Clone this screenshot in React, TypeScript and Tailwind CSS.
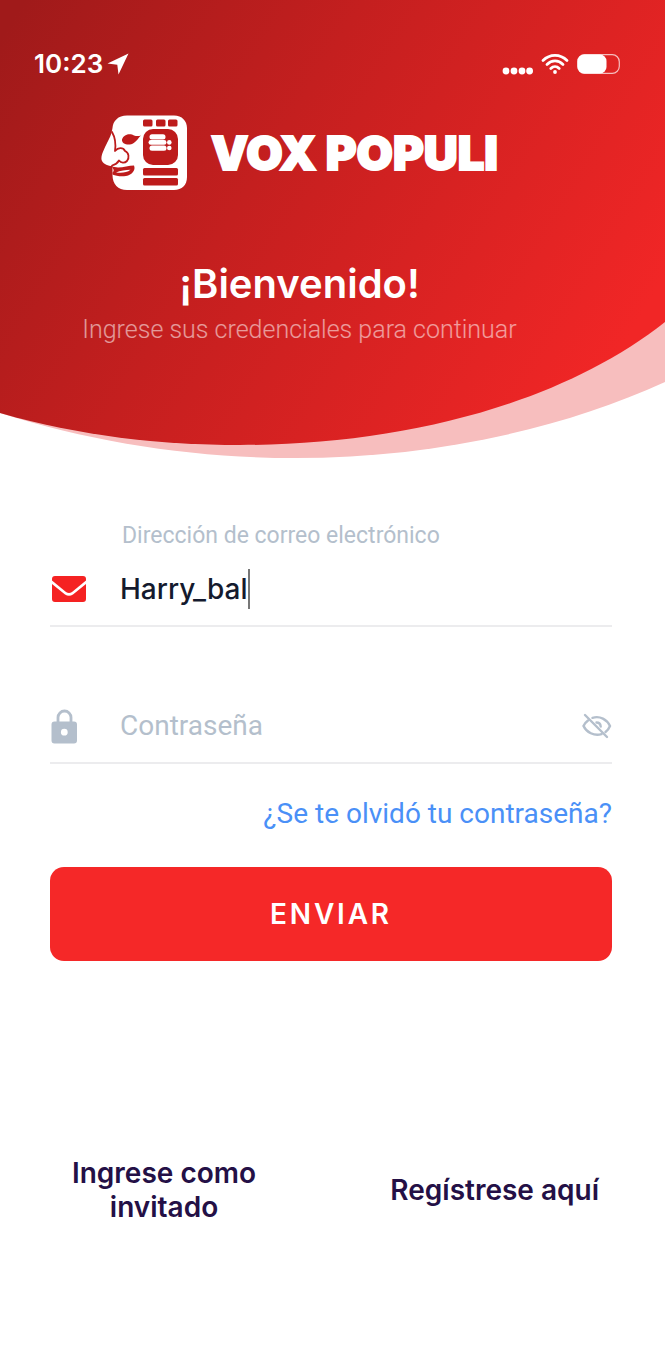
import React, { useState } from 'react';

function HeaderWave() {
  return (
    <svg
      className="absolute inset-0 w-full h-full"
      viewBox="0 0 665 460"
      preserveAspectRatio="none"
      aria-hidden="true"
    >
      <defs>
        <linearGradient id="wave" gradientUnits="userSpaceOnUse" x1="0" y1="40" x2="590" y2="400">
          <stop offset="0" stopColor="#a01a1a" />
          <stop offset="0.42" stopColor="#c41f1f" />
          <stop offset="1" stopColor="#f12626" />
        </linearGradient>
      </defs>
      <path d="M0 0V413C95 443 195 458 295 458C430 458 560 430 665 382V0Z" fill="#f7bebe" />
      <path d="M0 0V413C80 436 160 445 240 445C400 445 560 405 665 322V0Z" fill="url(#wave)" />
    </svg>
  );
}

function LocationIcon() {
  return (
    <svg width="22" height="22" viewBox="0 0 22 22" fill="#fff" aria-hidden="true">
      <path d="M21.5 0.5L11.5 21.5L10.3 11.7L0.5 10.5Z" />
    </svg>
  );
}

function SignalIcon() {
  return (
    <svg width="32" height="22" viewBox="0 0 32 22" fill="#fff" aria-hidden="true">
      <circle cx="5" cy="18" r="3.4" />
      <circle cx="13" cy="18" r="3.4" />
      <circle cx="21" cy="18" r="3.4" />
      <circle cx="28.6" cy="18" r="3.4" />
    </svg>
  );
}

function WifiIcon() {
  return (
    <svg width="28" height="22" viewBox="0 0 28 22" fill="none" stroke="#fff" strokeWidth="2.8" strokeLinecap="round" aria-hidden="true">
      <path d="M2 7.4C8.8 0.6 19.2 0.6 26 7.4" />
      <path d="M6 11.4C10.6 6.8 17.4 6.8 22 11.4" />
      <path d="M9.8 15.4C12.2 13 15.8 13 18.2 15.4" />
      <circle cx="14" cy="19" r="1.9" fill="#fff" stroke="none" />
    </svg>
  );
}

function BatteryIcon() {
  return (
    <svg width="43" height="20" viewBox="0 0 43 20" aria-hidden="true">
      <rect x="0.7" y="0.7" width="41.6" height="18.6" rx="7" fill="none" stroke="#fff" strokeOpacity="0.7" strokeWidth="1.2" />
      <rect x="0.5" y="0.5" width="29" height="19" rx="6.5" fill="#fff" />
    </svg>
  );
}

function FaceLogo() {
  return (
    <svg width="88" height="76" viewBox="0 0 88 76" aria-hidden="true">
      <path
        d="M26 0.5H73C81 0.5 86 6 86 13V62C86 70 81 75 73 75H26C17 75 11.5 69 11.5 60V51C7 51 3 49.5 1 46C-0.5 43 1 39 3 34.5C6 27.5 9 23 10.5 18L11.5 13C12 6 17 0.5 26 0.5Z"
        fill="#fff"
      />
      <g fill="none" stroke="#bd1b1b" strokeWidth="1.8" strokeLinecap="round" strokeLinejoin="round">
        <path d="M11 17C14.5 23 15 29 14 36C17 32.5 22 32 24 36C28 37.500 28.500 43 26 46C23.500 48.500 20 48 18 45.500C16 49 13 50 11 50.500" />
      </g>
      <g fill="#bd1b1b">
        <path d="M21 24.5C23 18.5 30 18.5 33 20.500C36 21.500 38 21 40 20.500C37 23 35 28.500 29 29.500C24.500 30 20.500 28 21 24.5Z" />
        <path
          fillRule="evenodd"
          d="M10.5 51C17 54.500 26 50.500 33 50.500C35 55 31 60 25 61C20 61.800 15 61 11.500 59.500V57.500C14 55.500 12 53.500 10.500 51ZM15 57.500C20 58 26 58 29.500 54.800C25 55 19 55.500 15 57.500Z"
        />
        <rect x="42" y="4.5" width="9.500" height="7" rx="1.500" />
        <rect x="55" y="4.5" width="9.500" height="7" rx="1.500" />
        <rect x="67" y="4.5" width="9.500" height="7" rx="1.500" />
        <rect x="42" y="14" width="35" height="36" rx="10" />
        <rect x="42" y="53" width="35" height="7.500" rx="1.500" />
        <rect x="42" y="63" width="35" height="7.500" rx="1.500" />
      </g>
      <g fill="#fff">
        <rect x="48.500" y="19.2" width="16" height="5.2" rx="2.500" />
        <rect x="47.500" y="25" width="18" height="4.800" rx="2.400" />
        <rect x="48.500" y="30.500" width="17" height="5.2" rx="2.500" />
        <circle cx="68.300" cy="27.400" r="2.300" />
        <circle cx="68.300" cy="33" r="2.300" />
      </g>
    </svg>
  );
}

function MailIcon() {
  return (
    <svg width="36" height="28" viewBox="0 0 36 28" fill="#f52222" aria-hidden="true">
      <path d="M4 1H32Q35 1 35 4V5.5L21 17Q18 19 15 17L1 5.5V4Q1 1 4 1Z" />
      <path d="M1 9L14 19.5Q18 22 22 19.5L35 9V24Q35 27 32 27H4Q1 27 1 24Z" />
    </svg>
  );
}

function LockIcon() {
  return (
    <svg width="28" height="36" viewBox="0 0 28 36" aria-hidden="true">
      <path d="M8 15V9.500A6.500 6.500 0 0 1 21 9.500V15" fill="none" stroke="#b4bfcc" strokeWidth="2.800" />
      <path fillRule="evenodd" d="M4.500 13.500H24Q27 13.500 27 16.500V32.500Q27 35.500 24 35.500H4.500Q1.500 35.500 1.500 32.500V16.500Q1.500 13.500 4.500 13.500ZM14.300 20.800A3.400 3.400 0 1 0 14.300 27.600A3.400 3.400 0 1 0 14.300 20.800Z" fill="#b4bfcc" />
    </svg>
  );
}

function EyeOffIcon() {
  return (
    <svg width="30" height="26" viewBox="0 0 30 26" fill="none" stroke="#b4bfcc" strokeWidth="2.4" strokeLinecap="round" aria-hidden="true">
      <path d="M3 2L25 24" />
      <path d="M10.5 4.8C18 2.5 25 6.5 28 13C27 15.500 25.5 17.500 23.5 19" />
      <path d="M6 7.5C4 9 2.4 10.500 1.5 13C4.5 19.5 12 23.2 19.5 21.200" />
      <path d="M14.5 9.5C17 9.500 18.500 11 18.700 13.500" />
    </svg>
  );
}

export default function App() {
  const [email, setEmail] = useState('Harry_bal');
  const [password, setPassword] = useState('');
  const [visible, setVisible] = useState(false);

  return (
    <div className="min-h-screen bg-white font-['Inter',sans-serif]">
      <header className="relative h-[460px]">
        <HeaderWave />
        <div className="relative text-white">
          {/* Status bar */}
          <div className="flex items-center justify-between pt-12 pl-[34px] pr-[45px]">
            <div className="flex items-center gap-1">
              <span className="text-[26px] leading-8 font-semibold">10:23</span>
              <LocationIcon />
            </div>
            <div className="flex items-center gap-2">
              <SignalIcon />
              <WifiIcon />
              <BatteryIcon />
            </div>
          </div>

          <div className="flex flex-col items-center pr-[66px] pt-[35px]">
            <div className="flex items-center gap-[22px]">
              <FaceLogo />
              <span className="font-black text-[47px] leading-[76px] whitespace-nowrap [-webkit-text-stroke:2px_white]">
                VOX POPULI
              </span>
            </div>
            <h1 className="mt-[67px] text-[40px] leading-[52px] font-semibold">¡Bienvenido!</h1>
            <p className="mt-1 font-['Roboto',sans-serif] text-[25px] leading-8 font-light text-white/55 whitespace-nowrap">
              Ingrese sus credenciales para continuar
            </p>
          </div>
        </div>
      </header>

      <main className="pl-[50px] pr-[53px] pt-[60px]">
        <form onSubmit={(e) => e.preventDefault()}>
          <label htmlFor="email" className="block pl-[72px] font-['Roboto',sans-serif] text-[23px] leading-8 text-[#b4bfcc]">
            Dirección de correo electrónico
          </label>
          <div className="flex items-center h-[75px] border-b-2 border-[#ececee]">
            <div className="w-[70px] pl-px">
              <MailIcon />
            </div>
            <input
              id="email"
              type="text"
              value={email}
              onChange={(e) => setEmail(e.target.value)}
              className="field-sizing-content text-[28px] leading-10 font-medium text-[#141a2e] outline-none"
            />
            <span className="w-[2px] h-[40px] bg-[#777]" />
          </div>

          <div className="flex items-center h-[74px] mt-[63px] border-b-2 border-[#ececee]">
            <div className="w-[70px]">
              <LockIcon />
            </div>
            <input
              id="password"
              type={visible ? 'text' : 'password'}
              aria-label="Contraseña"
              placeholder="Contraseña"
              value={password}
              onChange={(e) => setPassword(e.target.value)}
              className="flex-1 min-w-0 font-['Roboto',sans-serif] text-[28px] leading-10 text-[#141a2e] placeholder:text-[#b4bfcc] outline-none"
            />
            <button type="button" aria-label="Mostrar contraseña" onClick={() => setVisible(!visible)}>
              <EyeOffIcon />
            </button>
          </div>

          <div className="flex justify-end mt-[30px]">
            <a href="#" className="font-['Roboto',sans-serif] text-[28px] leading-10 text-[#4a90f7] whitespace-nowrap">
              ¿Se te olvidó tu contraseña?
            </a>
          </div>

          <button
            type="submit"
            className="w-full h-[94px] mt-[33px] rounded-[14px] bg-[#f52828] text-white text-[28px] font-semibold tracking-widest"
          >
            ENVIAR
          </button>
        </form>
      </main>

      <footer className="flex items-center justify-between px-[66px] pt-[195px] text-[28px] leading-[34px] font-semibold text-[#241046] text-center">
        <a href="#" className="w-[196px]">
          Ingrese como invitado
        </a>
        <a href="#" className="whitespace-nowrap">
          Regístrese aquí
        </a>
      </footer>
    </div>
  );
}
